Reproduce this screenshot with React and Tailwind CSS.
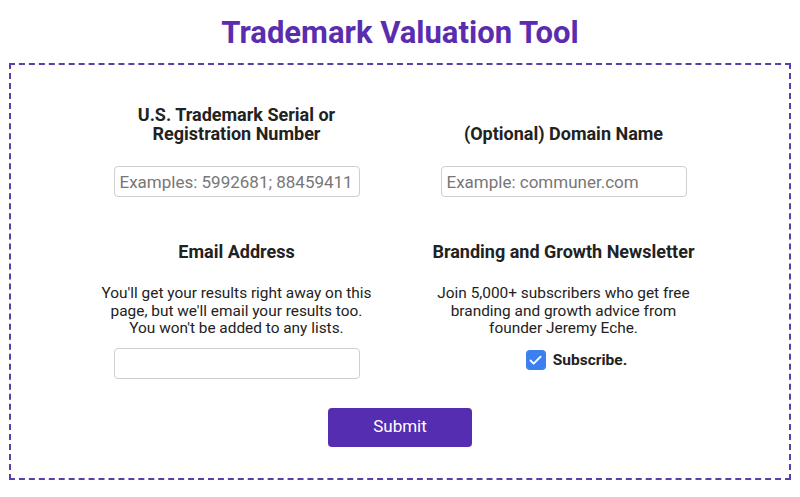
import { Check } from 'lucide-react'

export default function App() {
  return (
    <div className="h-[497px] w-[800px] overflow-hidden bg-white font-['Roboto','Liberation_Sans',sans-serif] text-[#222]">
      <h1 className="pt-[15px] text-center text-[31px] font-bold leading-[36px] text-[#5a2dae]">Trademark Valuation Tool</h1>

      <form className="mx-[9px] mt-[12px] h-[417px] border-2 border-dashed border-[#5b3fa8] pt-[41px]">
        <div className="mx-auto grid w-[654px] grid-cols-2">
          <Field label={<>U.S. Trademark Serial or<br />Registration Number</>} placeholder="Examples: 5992681; 88459411" />
          <Field label="(Optional) Domain Name" placeholder="Example: communer.com" />
        </div>

        <div className="mx-auto mt-[46px] grid w-[654px] grid-cols-2">
          <div className="flex flex-col items-center">
            <h2 className="text-[18px] font-bold leading-[18px]">Email Address</h2>
            <p className="mt-[24px] text-center text-[15.4px] leading-[17.5px]">
              You'll get your results right away on this
              <br />
              page, but we'll email your results too.
              <br />
              You won't be added to any lists.
            </p>
            <input type="email" className="mt-[10px] h-[31px] w-[246px] rounded-[4px] border border-[#cfcfcf] px-[6px] text-[17px] outline-none" />
          </div>
          <div className="flex flex-col items-center">
            <h2 className="text-[18px] font-bold leading-[18px]">Branding and Growth Newsletter</h2>
            <p className="mt-[24px] text-center text-[15.4px] leading-[17.5px]">
              Join 5,000+ subscribers who get free
              <br />
              branding and growth advice from
              <br />
              founder Jeremy Eche.
            </p>
            <label className="mt-[11px] ml-[26px] flex items-center gap-[7px]">
              <span className="flex h-[20px] w-[20px] items-center justify-center rounded-[4px] bg-[#3b7ff0]">
                <Check size={15} strokeWidth={3} className="text-white" />
              </span>
              <span className="text-[15.5px] font-bold">Subscribe.</span>
            </label>
          </div>
        </div>

        <div className="mt-[29px] flex justify-center">
          <button type="button" className="h-[39px] w-[144px] rounded-[4px] bg-[#552db0] text-[17px] text-white">
            Submit
          </button>
        </div>
      </form>
    </div>
  )
}

function Field({ label, placeholder }) {
  return (
    <div className="flex flex-col items-center">
      <div className="flex h-[37px] items-end">
        <h2 className="text-center text-[18px] font-bold leading-[18.5px]">{label}</h2>
      </div>
      <input
        type="text"
        placeholder={placeholder}
        className="mt-[23px] h-[31px] w-[246px] rounded-[4px] border border-[#cfcfcf] px-[5px] text-[17px] outline-none placeholder:text-[#777]"
      />
    </div>
  )
}
